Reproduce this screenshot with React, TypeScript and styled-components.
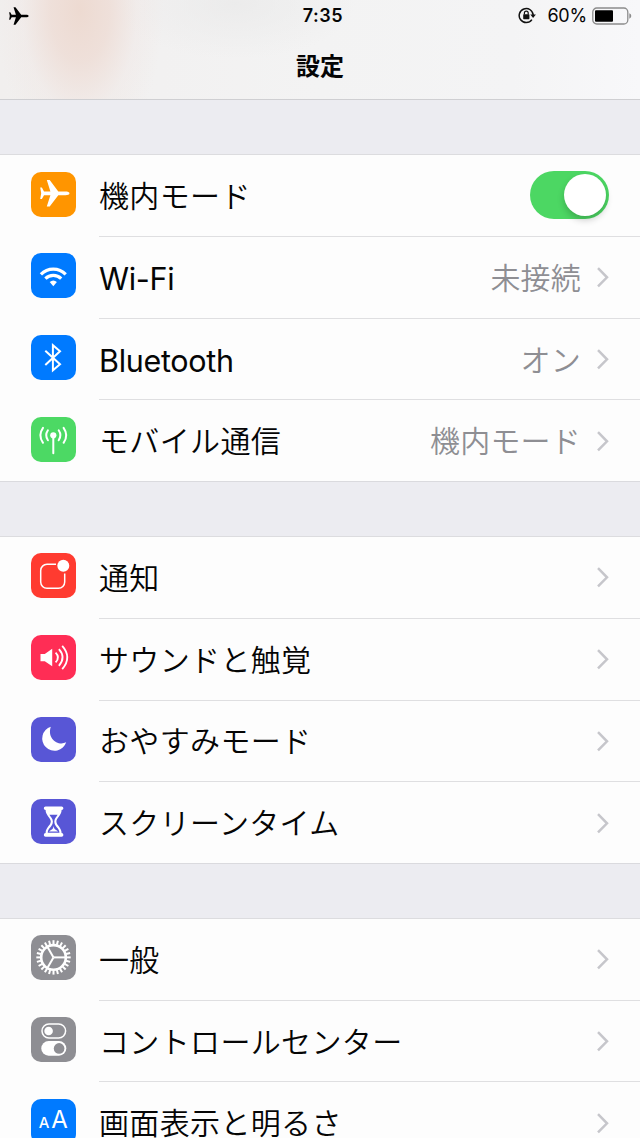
import React from 'react';
import styled, { createGlobalStyle } from 'styled-components';

const GlobalStyle = createGlobalStyle`
  * { box-sizing: border-box; }
  html, body { margin: 0; padding: 0; }
  body {
    width: 640px;
    height: 1138px;
    overflow: hidden;
    background: #ececf1;
    color: #050505;
    font-family: Inter, "Noto Sans CJK JP", sans-serif;
  }
`;

const Screen = styled.div`
  width: 640px;
  height: 1138px;
  overflow: hidden;
  display: flex;
  flex-direction: column;
  background: #ececf1;
`;

const Header = styled.header`
  flex: none;
  height: 100px;
  border-bottom: 1px solid #cfcfd2;
  background:
    radial-gradient(ellipse 84px 150px at 80px 10px, rgba(237, 218, 209, 1), rgba(238, 221, 214, 0.85) 35%, rgba(240, 230, 227, 0.4) 68%, rgba(241, 237, 236, 0) 100%),
    radial-gradient(ellipse 120px 55px at 235px 4px, rgba(234, 234, 234, 0.8), rgba(241, 241, 241, 0) 100%),
    linear-gradient(90deg, #f1efee 0%, #f2f1f1 25%, #f3f3f3 50%, #f4f4f5 80%, #f8f8fa 100%);
`;

const StatusBar = styled.div`
  height: 32px;
  padding: 0 8px 0 9px;
  display: grid;
  grid-template-columns: 1fr 56px 1fr;
  align-items: center;
`;

const StatusTime = styled.span`
  font-size: 18px;
  font-weight: 600;
  line-height: 32px;
  letter-spacing: 0.5px;
  text-align: center;
  text-indent: 5px;
`;

const StatusRight = styled.div`
  display: flex;
  align-items: center;
  justify-content: flex-end;
`;

const BatteryText = styled.span`
  font-size: 18px;
  line-height: 32px;
  letter-spacing: -0.2px;
  margin: 0 5px 0 11px;
`;

const Title = styled.h1`
  margin: 0;
  font-size: 24px;
  font-weight: 700;
  line-height: 69px;
  text-align: center;
`;

const Group = styled.section`
  flex: none;
  margin-top: 54.1px;
  border-top: 1px solid #dcdcdf;
  border-bottom: 1px solid #dadade;
  background: #fdfdfd;

  & + & { margin-top: 54px; }
`;

const Row = styled.div<{ $last?: boolean }>`
  height: ${(p) => (p.$last ? 80.5 : 81.8)}px;
  padding-left: 31px;
  display: flex;
  align-items: flex-start;
`;

const IconTile = styled.span<{ $color: string }>`
  flex: none;
  width: 45px;
  height: 45px;
  margin: 16.5px 23px 0 0;
  border-radius: 10px;
  background: ${(p) => p.$color};

  svg { display: block; }
`;

const RowBody = styled.div<{ $last?: boolean }>`
  flex: 1;
  height: 81.8px;
  padding-right: 31px;
  display: flex;
  align-items: center;
  border-bottom: 1px solid ${(p) => (p.$last ? 'transparent' : '#dfdfe1')};
`;

const Label = styled.span<{ $latin?: boolean }>`
  flex: 1;
  padding-bottom: ${(p) => (p.$latin ? 0 : 3)}px;
  padding-top: ${(p) => (p.$latin ? 2 : 0)}px;
  font-size: ${(p) => (p.$latin ? 30.5 : 30)}px;
  font-weight: ${(p) => (p.$latin ? 400 : 350)};
  letter-spacing: ${(p) => (p.$latin ? '-0.3px' : '0.35px')};
  white-space: nowrap;
`;

const Value = styled.span`
  padding-bottom: 3px;
  font-size: 30px;
  font-weight: 350;
  letter-spacing: 0.2px;
  color: #8e8e93;
  margin-right: 15px;
  white-space: nowrap;
`;

const Switch = styled.span`
  width: 79px;
  height: 48px;
  padding: 3px;
  display: flex;
  justify-content: flex-end;
  border-radius: 24px;
  background: #4cd763;
`;

const Knob = styled.span`
  width: 42px;
  height: 42px;
  border-radius: 50%;
  background: #fff;
  box-shadow: 0 4px 7px rgba(0, 0, 0, 0.2);
`;

const planePath =
  'M38.5 21.3c0 1.5-2 1.9-4 1.9h-7.200L18.700 34.600h-2.900L19.400 23.200h-6.400L10.900 27H9.200l1-5.700-1-5.700h1.700l2.100 3.800h6.400L15.800 8h2.900l8.600 11.400h7.200c2 0 4 .4 4 1.900z';

const Plane = () => <path d={planePath} fill="#fff" />;

const Wifi = () => (
  <g fill="none" stroke="#fff" strokeWidth="3.2">
    <path d="M9.9 21.3a17.3 17.3 0 0 1 24.8 0" />
    <path d="M14.4 25.7a11.2 11.2 0 0 1 15.8 0" />
    <path d="M22.3 33.2l-3.6-4.3q3.6-3 7.2 0z" fill="#fff" stroke="none" />
  </g>
);

const Bluetooth = () => (
  <path d="M14.3 15.8L29 29.3l-7.1 6V10.2l7.1 6L14.3 30" fill="none" stroke="#fff" strokeWidth="2" />
);

const Cellular = () => (
  <g fill="none" stroke="#fff" strokeWidth="2" strokeLinecap="round">
    <circle cx="22.3" cy="18.3" r="3.1" fill="#fff" stroke="none" />
    <path d="M22.3 19v17.3" />
    <path d="M16.9 13.3q-3.4 5 0 10M12 10.8q-5.3 7.5 0 15" />
    <path d="M27.7 13.3q3.4 5 0 10M32.6 10.8q5.3 7.5 0 15" />
  </g>
);

const Notification = () => (
  <>
    <path
      d="M25 11.3H16A6.3 6.3 0 0 0 9.7 17.6V29A6.3 6.3 0 0 0 16 35.3h11.4a6.3 6.3 0 0 0 6.3-6.3v-8.5"
      fill="none"
      stroke="#fff"
      strokeWidth="1.5"
    />
    <circle cx="32.3" cy="12.7" r="6" fill="#fff" />
  </>
);

const Sound = () => (
  <>
    <path d="M9.5 19h4.3l7.4-5.3v17.6l-7.4-5H9.5z" fill="#fff" />
    <g fill="none" stroke="#fff" strokeWidth="1.8">
      <path d="M24.6 17.6q4.8 4.8 0 9.8" />
      <path d="M27.9 14.2q7.4 8.2 0 16.6" />
      <path d="M31.2 10.9q10.2 11.5 0 23.2" />
    </g>
  </>
);

const Moon = () => (
  <path d="M19.8 9.7A12.3 12.3 0 1 0 35.2 25.3C27 29.5 15.8 21.5 19.8 9.7z" fill="#fff" />
);

const Hourglass = () => (
  <>
    <path
      d="M14.6 7.5h16q1.8 0 1.8 1.7t-1.8 1.8c0 5.5-5.2 7.8-5.2 11.6s5.2 6 5.2 11.5q1.8.1 1.8 1.8t-1.8 1.8h-16q-1.8 0-1.8-1.8t1.800-1.8c0-5.5 5.2-7.7 5.2-11.5S14.6 16.5 14.6 11q-1.8-.1-1.8-1.8t1.8-1.7z"
      fill="#fff"
    />
    <path
      d="M18.4 15.8h8.2c-1 2-3.3 3.8-3.3 6.8 0 5 4.8 6.3 5.2 11.2H16.700c.4-4.900 5.200-6.200 5.200-11.200 0-3-2.500-4.800-3.500-6.800z"
      fill="#5856d6"
    />
    <path d="M22.6 27c.3 4 3.9 4.4 4.6 5.6h-9.2c.7-1.2 4.3-1.6 4.6-5.6z" fill="#fff" />
  </>
);

const teeth = Array.from({ length: 24 }, (_, i) => i * 15);

const Gear = () => (
  <g transform="translate(22.5 22.4)" fill="none" stroke="#fff">
    <circle r="12.300" strokeWidth="2.600" />
    {teeth.map((a) => (
      <path key={a} d="M13 0H17.200" strokeWidth="2" transform={`rotate(${a})`} />
    ))}
    {[0, 120, 240].map((a) => (
      <path key={a} d="M0 0H12" strokeWidth="2" transform={`rotate(${a})`} />
    ))}
  </g>
);

const Controls = () => (
  <>
    <rect x="11" y="7" width="23.6" height="14" rx="7" fill="none" stroke="#fff" strokeWidth="1.5" />
    <circle cx="17.6" cy="14" r="4.3" fill="#fff" />
    <rect x="10.3" y="24.1" width="25" height="14.6" rx="7.3" fill="#fff" />
    <circle cx="28.1" cy="31.4" r="5.3" fill="#8e8e93" />
  </>
);

const Display = () => (
  <g fill="#fff" fontFamily="Inter, sans-serif">
    <text x="7.8" y="28.7" fontSize="15" fontWeight="500">A</text>
    <text x="20.3" y="28.7" fontSize="24">A</text>
  </g>
);

const ChevronIcon = styled.svg`
  overflow: visible;
`;

const Chevron = () => (
  <ChevronIcon width="13" height="22" viewBox="0 0 13 22">
    <path d="M2 2.2l9 9.100-9 9.100" fill="none" stroke="#c6c6cb" strokeWidth="2.500" />
  </ChevronIcon>
);

const RotationLock = () => (
  <svg width="18" height="18" viewBox="0 0 18 18">
    <path d="M13.9 12.6A7 7 0 1 1 15.2 8.3" fill="none" stroke="#111" strokeWidth="1.5" />
    <path d="M12.3 7.5h5.6L15.1 11z" fill="#111" />
    <rect x="5.2" y="7.2" width="6.2" height="5" rx=".6" fill="#111" />
    <path d="M6.4 7.5V6.1a1.9 1.9 0 0 1 3.8 0v1.4" fill="none" stroke="#111" strokeWidth="1.2" />
  </svg>
);

const Battery = () => (
  <svg width="40" height="18" viewBox="0 0 40 18">
    <rect x=".8" y="1" width="35" height="16" rx="4" fill="none" stroke="#8c8c8c" strokeWidth="1.3" />
    <rect x="3" y="3.2" width="18" height="11.5" rx="1" fill="#000" />
    <path d="M37.3 6.3q2 .8 2 2.7t-2 2.7z" fill="#8c8c8c" />
  </svg>
);

type Item = {
  label: string;
  color: string;
  icon: React.ReactNode;
  value?: string;
  toggle?: boolean;
  latin?: boolean;
};

const groups: Item[][] = [
  [
    { label: '機内モード', color: '#ff9500', icon: <Plane />, toggle: true },
    { label: 'Wi-Fi', color: '#007aff', icon: <Wifi />, value: '未接続', latin: true },
    { label: 'Bluetooth', color: '#007aff', icon: <Bluetooth />, value: 'オン', latin: true },
    { label: 'モバイル通信', color: '#4cd964', icon: <Cellular />, value: '機内モード' },
  ],
  [
    { label: '通知', color: '#ff3b30', icon: <Notification /> },
    { label: 'サウンドと触覚', color: '#ff2d55', icon: <Sound /> },
    { label: 'おやすみモード', color: '#5856d6', icon: <Moon /> },
    { label: 'スクリーンタイム', color: '#5856d6', icon: <Hourglass /> },
  ],
  [
    { label: '一般', color: '#8e8e93', icon: <Gear /> },
    { label: 'コントロールセンター', color: '#8e8e93', icon: <Controls /> },
    { label: '画面表示と明るさ', color: '#007aff', icon: <Display /> },
  ],
];

export default function App() {
  return (
    <Screen lang="ja">
      <GlobalStyle />
      <Header>
        <StatusBar>
          <svg width="20" height="18" viewBox="9 7.8 30 27">
            <path d={planePath} fill="#000" />
          </svg>
          <StatusTime>7:35</StatusTime>
          <StatusRight>
            <RotationLock />
            <BatteryText>60%</BatteryText>
            <Battery />
          </StatusRight>
        </StatusBar>
        <Title>設定</Title>
      </Header>
      {groups.map((items, g) => (
        <Group key={g}>
          {items.map((item, i) => {
            const last = i === items.length - 1;
            return (
              <Row key={item.label} $last={last}>
                <IconTile $color={item.color}>
                  <svg width="45" height="45" viewBox="0 0 45 45">
                    {item.icon}
                  </svg>
                </IconTile>
                <RowBody $last={last}>
                  <Label $latin={item.latin}>{item.label}</Label>
                  {item.value && <Value>{item.value}</Value>}
                  {item.toggle ? (
                    <Switch>
                      <Knob />
                    </Switch>
                  ) : (
                    <Chevron />
                  )}
                </RowBody>
              </Row>
            );
          })}
        </Group>
      ))}
    </Screen>
  );
}
